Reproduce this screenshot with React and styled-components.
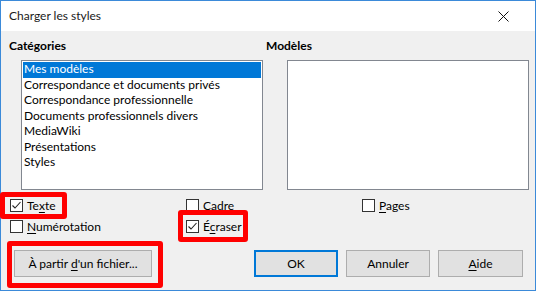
import React from 'react';
import styled, { createGlobalStyle } from 'styled-components';

const GlobalStyle = createGlobalStyle`
  body {
    margin: 0;
    background: #ffffff;
    font-family: Lato, "Liberation Sans", Arial, sans-serif;
  }
`;

const Window = styled.div`
  width: 534px;
  height: 289px;
  border: 1px solid #3b8ad9;
  background: #f0f0f0;
  display: flex;
  flex-direction: column;
  font-size: 12px;
  color: #000;
`;

const TitleBar = styled.div`
  height: 30px;
  background: #ffffff;
  display: flex;
  align-items: center;
  justify-content: space-between;
  padding: 0 26px 0 8px;
  flex-shrink: 0;
`;

const Title = styled.span`
  font-size: 12px;
  color: #1a1a1a;
  padding-bottom: 1px;
`;

const CloseIcon = styled.svg`
  width: 11px;
  height: 11px;
`;

const Body = styled.div`
  padding: 7px 6px 0 8px;
  display: flex;
  flex-direction: column;
`;

const Columns = styled.div`
  display: grid;
  grid-template-columns: 254px 1fr;
  column-gap: 3px;
`;

const Heading = styled.div`
  font-weight: bold;
  line-height: 16px;
  height: 16px;
`;

const ListBox = styled.div`
  margin: 6px 0 0 ${(p) => p.$indent}px;
  width: 242px;
  height: 130px;
  box-sizing: border-box;
  border: 1px solid #828790;
  background: #ffffff;
  padding: 1px;
`;

const ListItem = styled.div`
  height: 15.5px;
  line-height: 14px;
  padding-left: 1px;
  white-space: nowrap;
  background: ${(p) => (p.$selected ? '#0078d7' : 'transparent')};
  color: ${(p) => (p.$selected ? '#ffffff' : '#000000')};
`;

const Options = styled.div`
  margin: 5px 0 0 1px;
  display: grid;
  grid-template-columns: 176px 176px 176px;
  grid-auto-rows: 21px;
`;

const CheckItem = styled.label`
  justify-self: start;
  display: flex;
  align-items: center;
  gap: 4px;
  position: relative;
  line-height: 14px;

  ${(p) =>
    p.$mark &&
    `
    &::after {
      content: '';
      position: absolute;
      inset: ${p.$mark};
      border: 5px solid #ff0000;
      border-radius: 3px;
      pointer-events: none;
    }
  `}
`;

const Box = styled.span`
  width: 13px;
  height: 13px;
  box-sizing: border-box;
  border: 1px solid #333333;
  background: #ffffff;
  display: flex;
  align-items: center;
  justify-content: center;
`;

const Key = styled.span`
  text-decoration: underline;
  text-underline-offset: 2px;
`;

const ButtonRow = styled.div`
  margin-top: 13px;
  display: flex;
  justify-content: space-between;
  padding: 0 6px 0 5px;
`;

const Group = styled.div`
  display: flex;
  gap: 8px;
`;

const Button = styled.button`
  position: relative;
  height: 27px;
  width: ${(p) => p.$width}px;
  box-sizing: border-box;
  font-family: inherit;
  font-size: 12px;
  color: #000;
  background: #e1e1e1;
  border: ${(p) => (p.$default ? '2px solid #0078d7' : '1px solid #adadad')};
  padding: 0;

  ${(p) =>
    p.$mark &&
    `
    &::after {
      content: '';
      position: absolute;
      inset: ${p.$mark};
      border: 5px solid #ff0000;
      border-radius: 3px;
      pointer-events: none;
    }
  `}
`;

function Check({ checked, children, mark }) {
  return (
    <CheckItem $mark={mark}>
      <Box>
        {checked && (
          <svg width="11" height="11" viewBox="0 0 11 11">
            <polyline points="1.5,5.5 4,8 9.5,2" fill="none" stroke="#222" strokeWidth="1.1" />
          </svg>
        )}
      </Box>
      <span>{children}</span>
    </CheckItem>
  );
}

const categories = [
  'Mes modèles',
  'Correspondance et documents privés',
  'Correspondance professionnelle',
  'Documents professionnels divers',
  'MediaWiki',
  'Présentations',
  'Styles',
];

export default function App() {
  return (
    <>
      <GlobalStyle />
      <Window>
        <TitleBar>
          <Title>Charger les styles</Title>
          <CloseIcon viewBox="0 0 11 11">
            <path d="M0.5 0.5 L10.5 10.5 M10.5 0.5 L0.5 10.5" stroke="#111" strokeWidth="1" />
          </CloseIcon>
        </TitleBar>
        <Body>
          <Columns>
            <div>
              <Heading>Catégories</Heading>
              <ListBox $indent={12}>
                {categories.map((c, i) => (
                  <ListItem key={c} $selected={i === 0}>{c}</ListItem>
                ))}
              </ListBox>
            </div>
            <div>
              <Heading>Modèles</Heading>
              <ListBox $indent={21} />
            </div>
          </Columns>

          <Options>
            <Check checked mark="-3px -12px -3px -10px">
              Te<Key>x</Key>te
            </Check>
            <Check>Cadre</Check>
            <Check>
              <Key>P</Key>ages
            </Check>
            <Check>
              <Key>N</Key>umérotation
            </Check>
            <Check checked mark="-6px -6px -5px -8px">
              É<Key>c</Key>raser
            </Check>
          </Options>

          <ButtonRow>
            <Button $width={138} $mark="-10px -12px -12px -8px">
              À partir <Key>d</Key>'un fichier...
            </Button>
            <Group>
              <Button $width={84} $default>OK</Button>
              <Button $width={84}>Annuler</Button>
              <Button $width={85}>
                <Key>A</Key>ide
              </Button>
            </Group>
          </ButtonRow>
        </Body>
      </Window>
    </>
  );
}
